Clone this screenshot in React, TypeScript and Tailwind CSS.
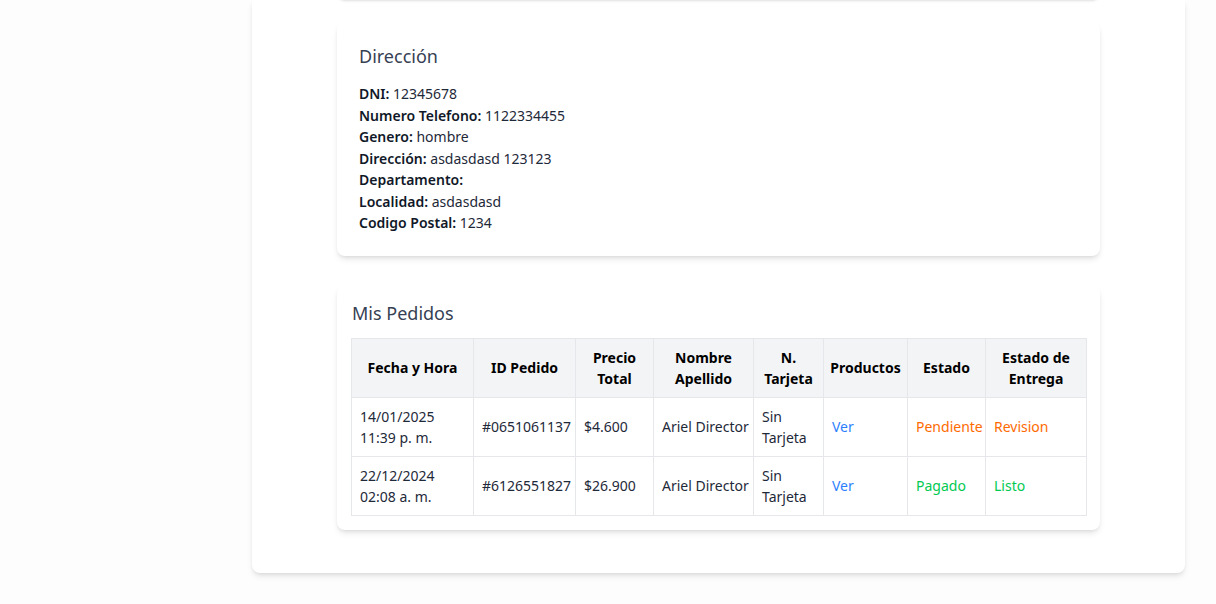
import React from "react";

const info: [string, string][] = [
  ["DNI:", "12345678"],
  ["Numero Telefono:", "1122334455"],
  ["Genero:", "hombre"],
  ["Dirección:", "asdasdasd 123123"],
  ["Departamento:", ""],
  ["Localidad:", "asdasdasd"],
  ["Codigo Postal:", "1234"],
];

const headers = [
  { t: ["Fecha y Hora"], w: "w-[122px]" },
  { t: ["ID Pedido"], w: "w-[102px]" },
  { t: ["Precio", "Total"], w: "w-[78px]" },
  { t: ["Nombre", "Apellido"], w: "w-[100px]" },
  { t: ["N.", "Tarjeta"], w: "w-[70px]" },
  { t: ["Productos"], w: "w-[84px]" },
  { t: ["Estado"], w: "w-[78px]" },
  { t: ["Estado de", "Entrega"], w: "w-[101px]" },
];

const rows = [
  {
    fecha: ["14/01/2025", "11:39 p. m."],
    id: "#0651061137",
    precio: "$4.600",
    nombre: "Ariel Director",
    estado: "Pendiente",
    entrega: "Revision",
    color: "text-orange-500",
  },
  {
    fecha: ["22/12/2024", "02:08 a. m."],
    id: "#6126551827",
    precio: "$26.900",
    nombre: "Ariel Director",
    estado: "Pagado",
    entrega: "Listo",
    color: "text-green-500",
  },
];

export default function App() {
  const td = "border border-gray-200 px-2 py-2 align-middle whitespace-nowrap";
  return (
    <div className="min-h-[604px] bg-[#fdfdfd] flex font-['Noto_Sans',sans-serif] text-gray-800">
      <div className="w-[252px] shrink-0" />
      <div className="w-[933px] shrink-0 self-start bg-white rounded-b-lg shadow-md pb-[43px] flex flex-col items-center">
        <div className="w-[763px] h-[10px] -mt-[10px] bg-white rounded-b-lg shadow-sm" />
        <div className="w-[763px] mt-[22px] bg-white rounded-lg shadow-md pt-5 pb-[22px] px-[22px]">
          <h2 className="text-lg leading-7 text-gray-700 mb-[13px]">Dirección</h2>
          <div className="text-sm leading-[21.5px]">
            {info.map(([k, v]) => (
              <div key={k}>
                <span className="font-semibold text-gray-900">{k}</span>
                {v ? " " + v : ""}
              </div>
            ))}
          </div>
        </div>
        <div className="w-[763px] mt-[29px] bg-white rounded-lg shadow-md p-3.5">
          <h2 className="text-lg leading-7 text-gray-700 mb-[11px] pl-[1px]">Mis Pedidos</h2>
          <table className="w-[735px] table-fixed border-collapse text-sm leading-[21px]">
            <thead>
              <tr className="bg-gray-100">
                {headers.map((h, i) => (
                  <th
                    key={i}
                    className={`${h.w} border border-gray-200 px-1 py-2 font-bold text-black text-center align-middle whitespace-nowrap`}
                  >
                    {h.t.map((l) => (
                      <div key={l}>{l}</div>
                    ))}
                  </th>
                ))}
              </tr>
            </thead>
            <tbody>
              {rows.map((r) => (
                <tr key={r.id}>
                  <td className={td}>
                    <div>{r.fecha[0]}</div>
                    <div>{r.fecha[1]}</div>
                  </td>
                  <td className={td}>{r.id}</td>
                  <td className={td}>{r.precio}</td>
                  <td className={td}>{r.nombre}</td>
                  <td className={td}>
                    <div>Sin</div>
                    <div>Tarjeta</div>
                  </td>
                  <td className={`${td} text-blue-500`}>Ver</td>
                  <td className={`${td} ${r.color}`}>{r.estado}</td>
                  <td className={`${td} ${r.color}`}>{r.entrega}</td>
                </tr>
              ))}
            </tbody>
          </table>
        </div>
      </div>
    </div>
  );
}
